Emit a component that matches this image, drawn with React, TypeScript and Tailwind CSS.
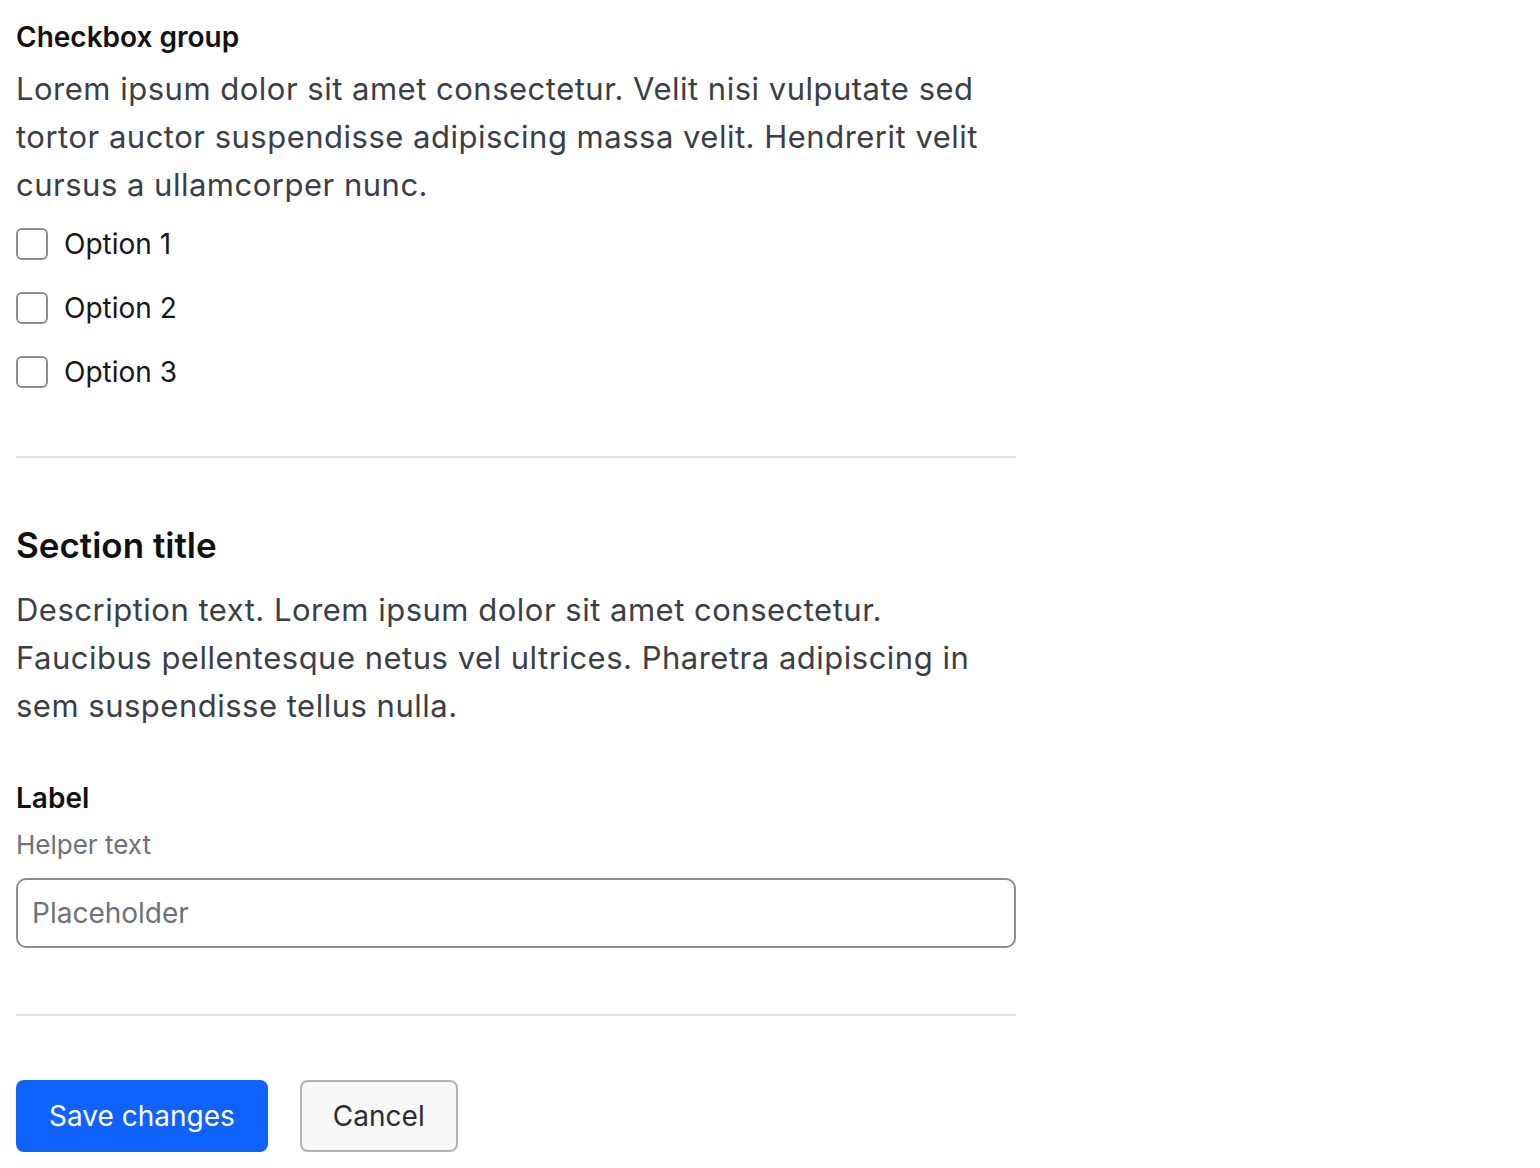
import React from 'react';

const options = ['Option 1', 'Option 2', 'Option 3'];

const App = () => {
  return (
    <div className="min-h-screen bg-white font-['Inter',sans-serif] antialiased">
      <div className="w-[1000px] ml-4 pt-5">
        <section className="pb-[68px]">
          <h3 className="text-[28px] leading-[34px] font-semibold text-[#111111]">Checkbox group</h3>
          <p className="mt-[11px] text-[31px] leading-[48px] tracking-[0.5px] text-[#3b3e47]">
            Lorem ipsum dolor sit amet consectetur. Velit nisi vulputate sed tortor auctor suspendisse adipiscing massa velit. Hendrerit velit cursus a ullamcorper nunc.
          </p>
          <div className="mt-[19px] flex flex-col gap-8">
            {options.map(opt => (
              <label key={opt} className="flex items-center gap-4 h-8">
                <span className="w-8 h-8 rounded-md border-2 border-[#8b8e99] bg-white"></span>
                <span className="text-[28px] text-[#161616]">{opt}</span>
              </label>
            ))}
          </div>
        </section>

        <div className="h-[2px] bg-[#e2e2e6]"></div>

        <section className="pt-[65px] pb-[66px]">
          <h2 className="text-[35px] leading-[44px] font-semibold text-[#111111]">Section title</h2>
          <p className="mt-[19px] text-[31px] leading-[48px] tracking-[0.5px] text-[#3b3e47]">
            Description text. Lorem ipsum dolor sit amet consectetur. Faucibus pellentesque netus vel ultrices. Pharetra adipiscing in sem suspendisse tellus nulla.
          </p>
          <div className="mt-[51px]">
            <div className="text-[28px] leading-[34px] font-semibold text-[#111111]">Label</div>
            <div className="mt-[14px] text-[26px] leading-[32px] text-[#6e717c]">Helper text</div>
            <div className="mt-[17px] h-[70px] rounded-[10px] border-2 border-[#8b8e99] flex items-center px-[14px]">
              <span className="text-[28px] text-[#6e717c]">Placeholder</span>
            </div>
          </div>
        </section>

        <div className="h-[2px] bg-[#e2e2e6]"></div>

        <div className="pt-16 flex gap-8">
          <button className="h-[72px] px-[33px] rounded-lg bg-[#0f62fe] text-white text-[28px]">Save changes</button>
          <button className="h-[72px] w-[158px] rounded-lg bg-[#f8f8f8] border-2 border-[#b2b2b6] text-[#2c2d33] text-[28px]">Cancel</button>
        </div>
      </div>
    </div>
  );
};

export default App;
